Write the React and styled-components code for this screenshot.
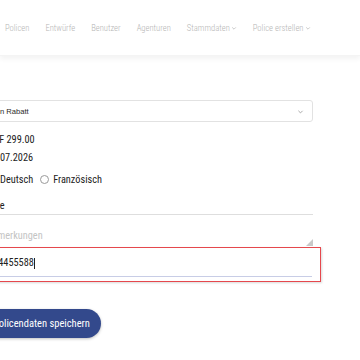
import React from "react";
import styled, { createGlobalStyle } from "styled-components";

const GlobalStyle = createGlobalStyle`
  html, body {
    margin: 0;
    padding: 0;
    background: #fff;
    overflow: hidden;
  }
  body {
    font-family: "Roboto Condensed", Roboto, "Liberation Sans", sans-serif;
    font-stretch: condensed;
  }
`;

const Page = styled.div`
  width: 360px;
  height: 360px;
  overflow: hidden;
  background: #fff;
`;

const NavBar = styled.nav`
  display: flex;
  align-items: center;
  gap: 16px;
  height: 55px;
  padding-left: 5px;
  background: #fff;
  box-shadow: 0 3px 5px rgba(0, 0, 0, 0.05);
  border-bottom: 1px solid #f4f4f4;
  position: relative;
  z-index: 1;
`;

const NavItem = styled.span`
  display: flex;
  align-items: center;
  gap: 1px;
  font-size: 8.6px;
  font-weight: 300;
  color: #b5b5b5;
  white-space: nowrap;
`;

const Form = styled.form`
  display: flex;
  flex-direction: column;
  width: 331px;
  margin-left: -18px;
  padding-top: 44px;
`;

const Select = styled.div`
  display: flex;
  align-items: center;
  justify-content: space-between;
  height: 20px;
  padding: 0 8px 0 6px;
  border: 1px solid #e2e2e2;
  border-radius: 3px;
  font-family: "Liberation Sans", Arial, sans-serif;
  font-stretch: normal;
  font-size: 7.6px;
  color: #2a2a2a;
`;

const Value = styled.div`
  padding-left: 5px;
  font-size: 10.3px;
  color: #222;
  line-height: 18px;
  margin-top: ${(p) => p.$top || 0}px;
`;

const RadioRow = styled.div`
  display: flex;
  align-items: center;
  margin-top: 3px;
  padding-left: 5px;
  height: 18px;
  font-size: 10.3px;
  color: #222;
`;

const RadioLabel = styled.label`
  display: flex;
  align-items: center;
  gap: 4px;
  margin-right: 7px;
`;

const Circle = styled.span`
  width: 9px;
  height: 9px;
  border: 1px solid #9a9a9a;
  border-radius: 50%;
  box-sizing: border-box;
`;

const LineInput = styled.div`
  margin-top: ${(p) => p.$top || 0}px;
  height: 16px;
  line-height: 16px;
  padding-bottom: ${(p) => p.$bottom || 0}px;
  font-size: 10.3px;
  color: #222;
  border-bottom: 1px solid ${(p) => (p.$focus ? "#c8cde6" : "#dedede")};
`;

const TextArea = styled.div`
  position: relative;
  margin-top: 9px;
  height: 19px;
  padding: 3px 5px 0;
  line-height: 18px;
  font-size: 10.3px;
  color: #c4c4c4;
`;

const Grip = styled.svg`
  position: absolute;
  right: 0;
  bottom: 0;
`;

const Invalid = styled.div`
  margin: 1px -8px 0 -8px;
  padding: 7px 8px 4px 8px;
  border: 1px solid #e5484d;
  box-shadow: 1px 1px 2px rgba(0, 0, 0, 0.15);
`;

const Caret = styled.span`
  display: inline-block;
  width: 1px;
  height: 11px;
  background: #222;
  vertical-align: middle;
`;

const SaveButton = styled.button`
  align-self: flex-start;
  margin-top: 27px;
  height: 29px;
  padding: 0 11px;
  border: none;
  border-radius: 15px;
  background: #33498c;
  color: #fff;
  font-family: "Roboto Condensed", Roboto, sans-serif;
  font-stretch: condensed;
  font-size: 10.5px;
  box-shadow: 0 1px 3px rgba(0, 0, 0, 0.25);
`;

const Chevron = ({ size = 6, color = "#b5b5b5" }) => (
  <svg width={size} height={size} viewBox="0 0 10 10">
    <path d="M2 4 L5 7 L8 4" fill="none" stroke={color} strokeWidth="1.2" />
  </svg>
);

export default function App() {
  return (
    <Page>
      <GlobalStyle />
      <NavBar>
        <NavItem>Policen</NavItem>
        <NavItem>Entwürfe</NavItem>
        <NavItem>Benutzer</NavItem>
        <NavItem>Agenturen</NavItem>
        <NavItem>
          Stammdaten
          <Chevron />
        </NavItem>
        <NavItem>
          Police erstellen
          <Chevron />
        </NavItem>
      </NavBar>
      <Form>
        <Select>
          <span>Kein Rabatt</span>
          <Chevron size={7} color="#999" />
        </Select>
        <Value $top={9}>CHF 299.00</Value>
        <Value>31.07.2026</Value>
        <RadioRow>
          <RadioLabel>
            <Circle />
            Deutsch
          </RadioLabel>
          <RadioLabel>
            <Circle />
            Französisch
          </RadioLabel>
        </RadioRow>
        <LineInput $top={10}>Keine</LineInput>
        <TextArea>
          Bemerkungen
          <Grip width="7" height="7" viewBox="0 0 7 7">
            <path d="M7 0 L7 7 L0 7 Z" fill="#c9c9c9" />
          </Grip>
        </TextArea>
        <Invalid>
          <LineInput $focus $bottom={5}>
            0794455588
            <Caret />
          </LineInput>
        </Invalid>
        <SaveButton type="button">Policendaten speichern</SaveButton>
      </Form>
    </Page>
  );
}
